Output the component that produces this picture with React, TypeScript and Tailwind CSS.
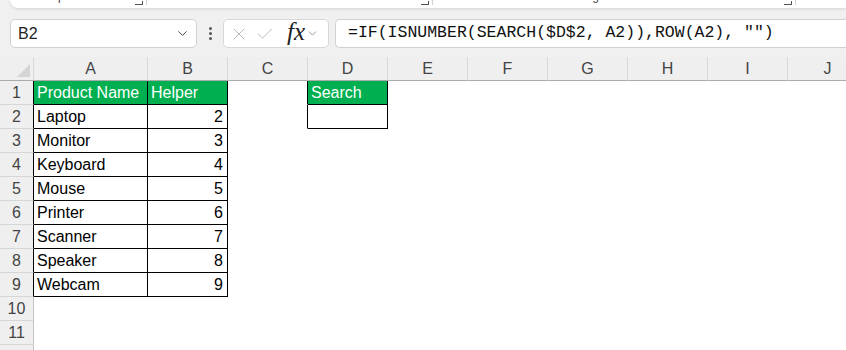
import { ChevronDown, X, Check } from 'lucide-react';

const cols = ['A', 'B', 'C', 'D', 'E', 'F', 'G', 'H', 'I', 'J'];

const products = ['Laptop', 'Monitor', 'Keyboard', 'Mouse', 'Printer', 'Scanner', 'Speaker', 'Webcam'];

// row index 1..12, col index 0..9
function cellBorders(r: number, c: number) {
  const inTable = r >= 1 && r <= 9 && c <= 1;
  const inSearch = r >= 1 && r <= 2 && c === 3;
  const leftOfSearch = r >= 1 && r <= 2 && c === 2;
  const right = inTable || inSearch || leftOfSearch ? 'border-r-black' : 'border-r-transparent';
  const bottom = inTable || inSearch ? 'border-b-black' : 'border-b-transparent';
  return `${right} ${bottom}`;
}

function Launcher() {
  return (
    <span className="flex items-end gap-[3px]">
      <span className="w-[8px] h-[4px] border-r border-b border-[#555]" />
      <span className="w-px h-[6px] bg-[#d0d0d0]" />
    </span>
  );
}

export default function App() {
  const rows = Array.from({ length: 12 }, (_, i) => i + 1);

  return (
    <div className="w-[846px] h-[350px] overflow-hidden bg-[#f0f0f0] font-['Liberation_Sans',Arial,sans-serif]">
      {/* ribbon bottom */}
      <div className="ml-[10px] h-[8px] bg-white rounded-bl-[8px] shadow-[0_1px_3px_rgba(0,0,0,0.12)] overflow-hidden">
        <div className="flex items-start h-[3px] text-[12px] leading-[14px] text-[#444]">
          <span className="ml-[34px] w-[91px] -mt-[11px]">Clipboard</span>
          <span className="-mt-[1px]"><Launcher /></span>
          <span className="ml-[124px] w-[150px] -mt-[11px]">Font</span>
          <span className="-mt-[1px]"><Launcher /></span>
          <span className="ml-[146px] w-[205px] -mt-[11px]">Alignment</span>
          <span className="-mt-[1px]"><Launcher /></span>
        </div>
      </div>

      {/* formula bar */}
      <div className="mt-[11px] h-[29px] flex items-center">
        <div className="ml-[10px] w-[187px] h-[29px] bg-white border border-[#d1d1d1] rounded-[5px] flex items-center justify-between pl-[7px] pr-[6px]">
          <span className="text-[16px] text-[#222]">B2</span>
          <ChevronDown className="w-[15px] h-[15px] text-[#444]" strokeWidth={1.6} />
        </div>
        <div className="w-[26px] flex flex-col items-center gap-[2px]">
          <span className="w-[3px] h-[3px] rounded-full bg-[#555]" />
          <span className="w-[3px] h-[3px] rounded-full bg-[#555]" />
          <span className="w-[3px] h-[3px] rounded-full bg-[#555]" />
        </div>
        <div className="w-[106px] h-[29px] bg-white border border-[#d8d8d8] rounded-[5px] flex items-center pl-[5px]">
          <X className="w-[20px] h-[20px] text-[#b5b5b5]" strokeWidth={1.1} />
          <Check className="ml-[6px] w-[20px] h-[20px] text-[#b5b5b5]" strokeWidth={1.1} />
          <span className="ml-[12px] font-['Liberation_Serif',serif] italic text-[25px] leading-none text-[#222] -mt-[4px]">fx</span>
          <ChevronDown className="ml-[1px] w-[13px] h-[13px] text-[#888]" strokeWidth={1.5} />
        </div>
        <div className="ml-[6px] flex-1 h-[29px] bg-white border border-r-0 border-[#d1d1d1] rounded-l-[5px] flex items-center pl-[12px]">
          <span className="font-['Liberation_Mono',monospace] text-[16.5px] text-[#111] whitespace-nowrap">
            =IF(ISNUMBER(SEARCH($D$2, A2)),ROW(A2), "")
          </span>
        </div>
      </div>

      {/* sheet */}
      <div className="mt-[9px] grid grid-cols-[34px_114px_80px_80px_80px_80px_80px_80px_80px_80px_80px] bg-white">
        {/* select all corner */}
        <div className="h-[24px] bg-[#efefef] border-r border-b border-r-[#d8d8d8] border-b-[#ababab] flex items-end justify-end pr-[3px] pb-[3px]">
          <span className="w-0 h-0 border-l-[13px] border-l-transparent border-b-[13px] border-b-[#d4d4d4]" />
        </div>
        {cols.map((c) => (
          <div
            key={c}
            className="h-[24px] bg-[#efefef] border-r border-b border-r-[#d8d8d8] border-b-[#ababab] flex items-center justify-center text-[16px] text-[#444]"
          >
            {c}
          </div>
        ))}

        {rows.map((r) => (
          <div key={r} className="contents">
            <div
              className={`h-[24px] bg-[#efefef] border-r border-b border-b-[#d6d6d6] flex items-center justify-center text-[16px] text-[#444] ${
                r <= 9 ? 'border-r-black' : 'border-r-[#c4c4c4]'
              }`}
            >
              {r}
            </div>
            {cols.map((c, ci) => {
              const green = (r === 1 && ci <= 1) || (r === 1 && ci === 3);
              let content: string | number = '';
              if (r === 1 && ci === 0) content = 'Product Name';
              if (r === 1 && ci === 1) content = 'Helper';
              if (r === 1 && ci === 3) content = 'Search';
              if (r >= 2 && r <= 9 && ci === 0) content = products[r - 2];
              if (r >= 2 && r <= 9 && ci === 1) content = r;
              const numeric = typeof content === 'number';
              return (
                <div
                  key={c}
                  className={`h-[24px] border-r border-b flex items-center whitespace-nowrap overflow-hidden text-[16px] ${cellBorders(r, ci)} ${
                    green ? 'bg-[#00b050] text-white' : 'text-black'
                  } ${numeric ? 'justify-end pr-[4px]' : 'pl-[3px]'}`}
                >
                  {content}
                </div>
              );
            })}
          </div>
        ))}
      </div>
    </div>
  );
}
